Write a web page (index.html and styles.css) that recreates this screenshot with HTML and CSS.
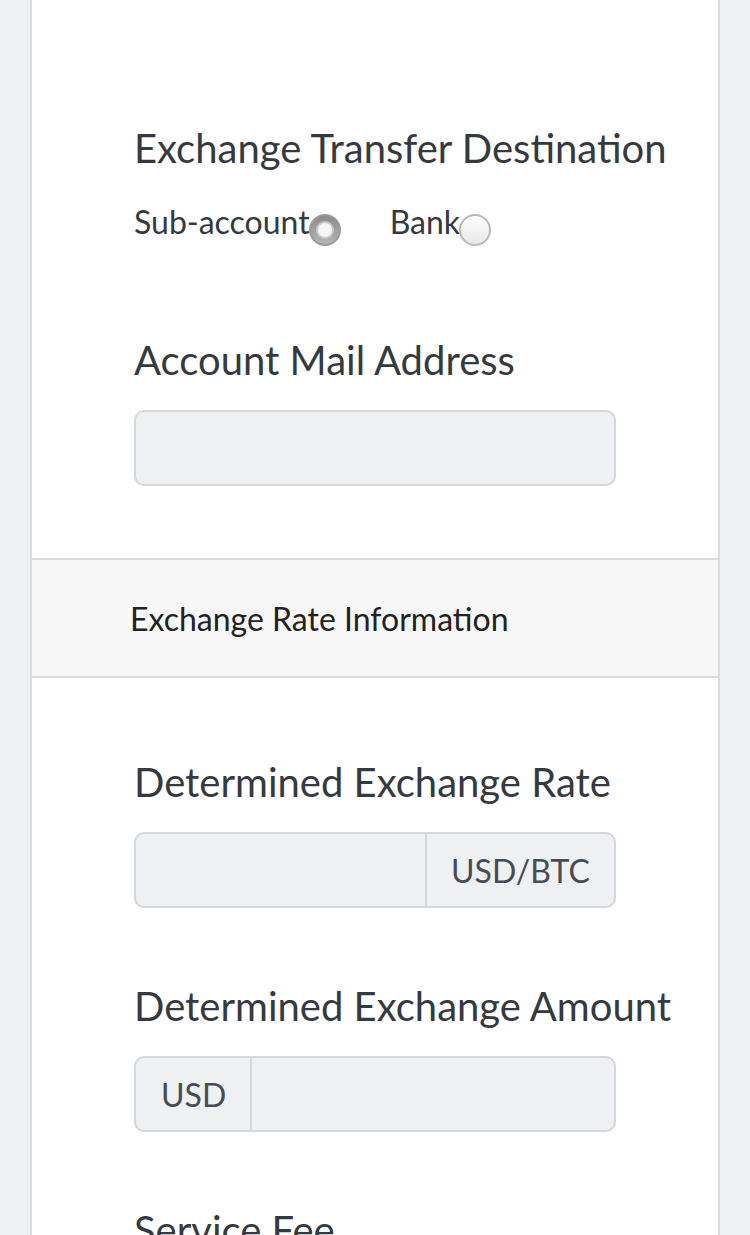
FILE: index.html
```html
<!DOCTYPE html>
<html>
<head>
<meta charset="utf-8">
<link rel="stylesheet" href="styles.css">
</head>
<body>
<div class="card">
  <section class="form-section first">
    <div class="group">
      <div class="label">Exchange Transfer Destination</div>
      <div class="radios">
        <label class="radio-item">Sub-account<span class="radio checked"></span></label>
        <label class="radio-item">Bank<span class="radio"></span></label>
      </div>
    </div>
    <div class="group">
      <div class="label">Account Mail Address</div>
      <div class="input-group"><div class="field"></div></div>
    </div>
  </section>
  <div class="section-header">Exchange Rate Information</div>
  <section class="form-section">
    <div class="group">
      <div class="label">Determined Exchange Rate</div>
      <div class="input-group"><div class="field"></div><div class="addon addon-right">USD/BTC</div></div>
    </div>
    <div class="group">
      <div class="label">Determined Exchange Amount</div>
      <div class="input-group"><div class="addon addon-left">USD</div><div class="field"></div></div>
    </div>
    <div class="group">
      <div class="label">Service Fee</div>
    </div>
  </section>
</div>
</body>
</html>
```
FILE: styles.css
```css
* { box-sizing: border-box; }
html, body { margin: 0; padding: 0; }
body {
  background: #eff0f2;
  font-family: Lato, "Open Sans", sans-serif;
  color: #353a40;
  height: 1235px;
  overflow: hidden;
}
.card {
  margin: 0 30px;
  background: #fff;
  border-left: 2px solid #dcdcdc;
  border-right: 2px solid #dcdcdc;
  min-height: 1235px;
}
.form-section {
  padding: 0 40px 72px 102px;
}
.form-section.first { padding-top: 121px; }
.form-section:not(.first) { padding-top: 77px; }
.group + .group { margin-top: 71px; }
.label {
  font-size: 40px;
  line-height: 54px;
  height: 54px;
  white-space: nowrap;
  margin-bottom: 23px;
}
.first .group:first-child .label { margin-bottom: 0; }
.first .group + .group { margin-top: 81px; }
.radios {
  display: flex;
  gap: 49px;
  margin-top: 17px;
  height: 60px;
  align-items: center;
}
.radio-item {
  display: flex;
  align-items: center;
  font-size: 32px;
  line-height: 40px;
}
.radio {
  display: inline-block;
  width: 32px;
  height: 32px;
  border-radius: 50%;
  margin-top: 16px;
  margin-left: -1px;
  background: linear-gradient(#fefefe, #e8e8e8);
  border: 2px solid #b9b9b9;
  position: relative;
}
.radio.checked {
  background: linear-gradient(#8a8a8a, #b5b5b5);
  border-color: #9a9a9a;
}
.radio.checked::after {
  content: "";
  position: absolute;
  left: 50%;
  top: 50%;
  width: 14px;
  height: 14px;
  margin: -7px 0 0 -7px;
  border-radius: 50%;
  background: #f6f6f6;
  box-shadow: 0 0 0 2px #c9c9c9;
}
.input-group {
  display: flex;
  width: 482px;
  height: 76px;
  border: 2px solid #d3d6da;
  border-radius: 10px;
  background: #eff0f2;
  overflow: hidden;
}
.field { flex: 1; }
.addon {
  display: flex;
  align-items: center;
  font-size: 32px;
  color: #474c52;
  padding: 0 24px 0 24px;
}
.addon-right { border-left: 2px solid #d3d6da; width: 189px; }
.addon-left { border-right: 2px solid #d3d6da; width: 116px; padding-left: 25px; }
.section-header {
  border-top: 2px solid #dcdcdc;
  border-bottom: 2px solid #dcdcdc;
  background: #f7f7f7;
  height: 120px;
  display: flex;
  align-items: center;
  padding-left: 98px;
  font-size: 32px;
  color: #222;
}
```
